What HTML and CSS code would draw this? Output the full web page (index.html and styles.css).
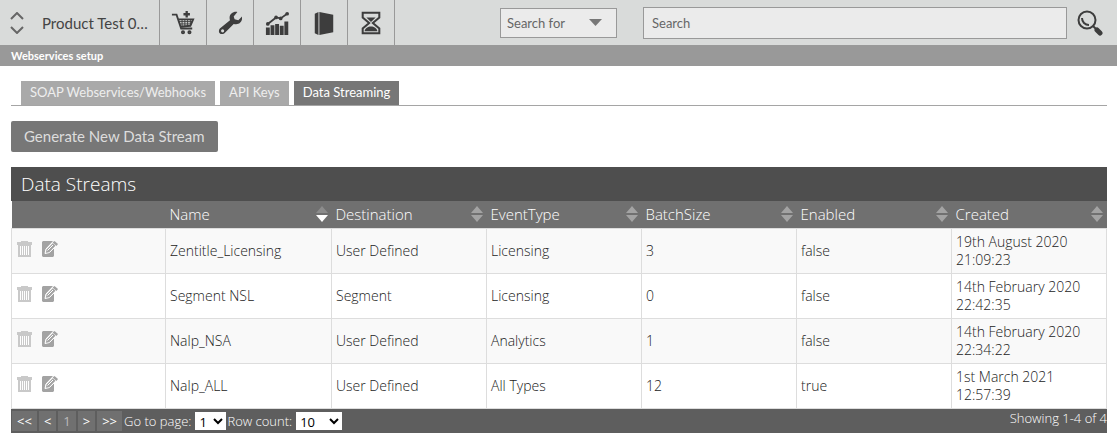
FILE: index.html
```
<!DOCTYPE html>
<html lang="en">
<head>
  <meta charset="UTF-8" />
  <meta name="viewport" content="width=device-width, initial-scale=1.0"/>
  <title>Webservices setup</title>
  <link rel="stylesheet" href="styles.css">
</head>
<body>

  <svg class="sprite" aria-hidden="true">
    <symbol id="trash" viewBox="0 0 16 16">
      <path fill="#c9c9c9" d="M0 1h4V0h7v1h4v3H0z"/>
      <path fill="#c9c9c9" d="M1 4h13v12H1z"/>
      <path stroke="#fff" d="M3.500 5v9M5.500 5v9M7.500 5v9M9.500 5v9M11.500 5v9"/>
    </symbol>
    <symbol id="edit" viewBox="0 0 16 16">
      <path fill="#a3a3a3" d="M1 0h10L4 7.500 3 12l4.500-1L12 6.500V15l-1 1H1l-1-1V1z"/>
      <path fill="#a3a3a3" d="M10.500 1.500 12.500 0 16 3l-1.500 2z"/>
      <path fill="none" stroke="#fff" d="M10.500 1.500 4 8l-1 4.500 4.500-1L14 5"/>
      <path fill="#a3a3a3" d="M10.700 2.200l2.800 2.600L7.300 11l-3.500.7.800-3.300z"/>
      <path stroke="#fff" d="M5.500 9.500 11 4"/>
    </symbol>
    <symbol id="sort" viewBox="0 0 12 16">
      <path d="M6 0l6 7H0z"/>
      <path fill="currentColor" d="M0 9h12l-6 7z"/>
    </symbol>
  </svg>

  <header class="topbar">
    <button class="product">
      <svg width="16" height="22" viewBox="0 0 16 22" fill="none" stroke="#666" stroke-width="2">
        <path d="M2 7l6-6 6 6M2 15l6 6 6-6"/>
      </svg>
      <span>Product Test 0…</span>
    </button>
    <nav class="tools">
      <a href="#" class="tool" aria-label="Orders">
        <svg viewBox="0 0 26 26" fill="none" stroke="#3d3d3d" stroke-width="2">
          <path d="M1 4h5l5 15h12M8 9h16l-3 7-11 1"/>
          <path stroke-width="1" d="M8 11.500h15M9 14h13M12 9v8M15 9v8M18 9v8M21 9v6"/>
          <path stroke-width="2.500" d="M17 0v7M13.500 3.500h7"/>
          <circle cx="13" cy="23" r="1.200"/>
          <circle cx="20" cy="23" r="1.200"/>
        </svg>
      </a>
      <a href="#" class="tool" aria-label="Settings">
        <svg viewBox="0 0 26 26">
          <path fill="#3d3d3d" fill-rule="evenodd" d="M21 1l-4 5 1 3 4 1 4-4c1 5-3 10-9 8L7 24c-4 3-8-1-5-5L13 10c-2-6 3-10 8-9zM5 19.800a1.700 1.700 0 1 0 0 3.400 1.700 1.700 0 0 0 0-3.400z"/>
        </svg>
      </a>
      <a href="#" class="tool" aria-label="Reports">
        <svg viewBox="0 0 26 26" fill="#3d3d3d">
          <path d="M1 18h4.200v8H1zM6 15.500h4.200V26H6zM11 14h4.200v12H11zM16 16h4.200v10H16zM21 11.500h4.200V26H21z"/>
          <path fill="none" stroke="#3d3d3d" stroke-width="2" d="M3 14l9-7 5 1 7-5"/>
          <circle cx="3" cy="14" r="2"/>
          <circle cx="12" cy="7" r="2"/>
          <circle cx="17" cy="8" r="2"/>
          <circle cx="24" cy="3" r="2"/>
        </svg>
      </a>
      <a href="#" class="tool" aria-label="Catalogue">
        <svg viewBox="0 0 26 26" fill="#3d3d3d">
          <path d="M3 3l4-2v25l-4-2zM8 1l15 3v19L8 26z"/>
        </svg>
      </a>
      <a href="#" class="tool" aria-label="History">
        <svg viewBox="0 0 26 26" fill="none" stroke="#3d3d3d" stroke-width="2.200">
          <path d="M4 2h18v5l-7 6 7 6v5H4v-5l7-6-7-6z"/>
          <path fill="#3d3d3d" stroke="none" d="M8 7h10l-5 5zM6 22c1-7 13-7 14 0z"/>
        </svg>
      </a>
    </nav>
    <form class="search">
      <select class="search-for" aria-label="Search for">
        <option>Search for</option>
      </select>
      <input class="search-box" type="text" placeholder="Search" aria-label="Search">
      <button class="search-button" type="button" aria-label="Run search">
        <svg width="26" height="26" viewBox="0 0 26 26" fill="none" stroke="#3d3d3d">
          <circle cx="10" cy="10" r="8.500" stroke-width="2"/>
          <path stroke-width="2" d="M5 8c0 4 3 7 7 7"/>
          <path stroke-width="2" d="M16 16l3 3"/>
          <path stroke-width="5" stroke-linecap="round" d="M20 20l3 3"/>
        </svg>
      </button>
    </form>
  </header>

  <div class="breadcrumb">Webservices setup</div>

  <main>
    <nav class="tabs">
      <a href="#" class="tab">SOAP Webservices/Webhooks</a>
      <a href="#" class="tab">API Keys</a>
      <a href="#" class="tab active">Data Streaming</a>
    </nav>

    <button class="generate">Generate New Data Stream</button>

    <section class="grid">
      <h1>Data Streams</h1>
      <table>
        <colgroup>
          <col class="col-actions">
          <col class="col-name">
          <col><col><col><col><col>
        </colgroup>
        <thead>
          <tr>
            <th></th>
            <th><div class="head sorted">Name <svg><use href="#sort"/></svg></div></th>
            <th><div class="head">Destination <svg><use href="#sort"/></svg></div></th>
            <th><div class="head">EventType <svg><use href="#sort"/></svg></div></th>
            <th><div class="head">BatchSize <svg><use href="#sort"/></svg></div></th>
            <th><div class="head">Enabled <svg><use href="#sort"/></svg></div></th>
            <th><div class="head">Created <svg><use href="#sort"/></svg></div></th>
          </tr>
        </thead>
        <tbody>
          <tr>
            <td><div class="actions"><button aria-label="Delete"><svg><use href="#trash"/></svg></button><button aria-label="Edit"><svg><use href="#edit"/></svg></button></div></td>
            <td>Zentitle_Licensing</td>
            <td>User Defined</td>
            <td>Licensing</td>
            <td>3</td>
            <td>false</td>
            <td>19th August 2020 21:09:23</td>
          </tr>
          <tr>
            <td><div class="actions"><button aria-label="Delete"><svg><use href="#trash"/></svg></button><button aria-label="Edit"><svg><use href="#edit"/></svg></button></div></td>
            <td>Segment NSL</td>
            <td>Segment</td>
            <td>Licensing</td>
            <td>0</td>
            <td>false</td>
            <td>14th February 2020 22:42:35</td>
          </tr>
          <tr>
            <td><div class="actions"><button aria-label="Delete"><svg><use href="#trash"/></svg></button><button aria-label="Edit"><svg><use href="#edit"/></svg></button></div></td>
            <td>Nalp_NSA</td>
            <td>User Defined</td>
            <td>Analytics</td>
            <td>1</td>
            <td>false</td>
            <td>14th February 2020 22:34:22</td>
          </tr>
          <tr>
            <td><div class="actions"><button aria-label="Delete"><svg><use href="#trash"/></svg></button><button aria-label="Edit"><svg><use href="#edit"/></svg></button></div></td>
            <td>Nalp_ALL</td>
            <td>User Defined</td>
            <td>All Types</td>
            <td>12</td>
            <td>true</td>
            <td>1st March 2021 12:57:39</td>
          </tr>
        </tbody>
      </table>
      <div class="pager">
        <div class="pages">
          <button>&lt;&lt;</button>
          <button>&lt;</button>
          <button class="current">1</button>
          <button>&gt;</button>
          <button>&gt;&gt;</button>
        </div>
        <label for="page">Go to page:</label>
        <select id="page" class="page-select"><option>1</option></select>
        <label for="rows">Row count:</label>
        <select id="rows" class="rows-select"><option>10</option><option>20</option><option>50</option></select>
        <span class="showing">Showing 1-4 of 4</span>
      </div>
    </section>
  </main>

</body>
</html>
```
FILE: styles.css
```
* {
  box-sizing: border-box;
}

body {
  margin: 0;
  font-family: 'Open Sans', sans-serif;
  font-size: 13px;
  background: #fff;
  color: #222;
}

button, input, select {
  font-family: inherit;
  margin: 0;
}

button {
  border: none;
  background: none;
  padding: 0;
  cursor: pointer;
}

a {
  text-decoration: none;
}

svg {
  display: block;
  flex: none;
}

.sprite {
  display: none;
}

.topbar,
.breadcrumb,
.tabs,
.generate {
  font-family: Lato, sans-serif;
}

.topbar {
  display: flex;
  height: 45px;
  background: #d9dbda;
}

.product {
  display: flex;
  align-items: center;
  gap: 17px;
  width: 160px;
  padding: 0 0 0 9px;
  border-right: 1px solid #999;
  font-size: 15px;
  color: #444;
  white-space: nowrap;
}

.tools {
  display: flex;
}

.tool {
  display: flex;
  align-items: center;
  justify-content: center;
  width: 47px;
  border-right: 1px solid #999;
}

.tool svg {
  width: 24px;
  height: 24px;
}

.search {
  display: flex;
  flex: 1;
  align-items: center;
  padding: 0 14px 0 105px;
}

.search-for,
.search-box {
  border: 1px solid #999;
  border-radius: 0;
  background: #ebebeb;
  color: #666;
  font-size: 13px;
}

.search-for {
  width: 117px;
  height: 30px;
  padding: 0 6px;
  appearance: none;
  background: #ebebeb url("data:image/svg+xml,%3Csvg xmlns='http://www.w3.org/2000/svg' width='13' height='7'%3E%3Cpath fill='%23777' d='M0 0h13L6.500 7z'/%3E%3C/svg%3E") no-repeat right 14px center;
}

.search-box {
  flex: 1;
  min-width: 0;
  height: 32px;
  margin-left: 26px;
  padding: 0 8px;
}

.search-box::placeholder {
  color: #666;
}

.search-button {
  margin-left: 10px;
}

.breadcrumb {
  padding: 0 11px;
  background: #999;
  color: #fff;
  font-size: 11px;
  font-weight: 700;
  line-height: 21px;
}

main {
  padding: 15px 10px 0 11px;
}

.tabs {
  display: flex;
  gap: 5px;
  padding-left: 10px;
  border-bottom: 1px solid #a5a5a5;
}

.tab {
  padding: 0 9px 2px;
  background: #a9a9a9;
  color: #eee;
  font-size: 13px;
  line-height: 22px;
}

.tab.active {
  background: #777;
  color: #fff;
}

.generate {
  display: block;
  height: 31px;
  margin: 15px 0;
  padding: 0 13px 2px;
  border-radius: 2px;
  background: #777;
  color: #ddd;
  font-size: 15px;
}

.grid h1 {
  margin: 0;
  padding: 0 10px;
  background: #4e4e4e;
  color: #fff;
  font-size: 19px;
  font-weight: 300;
  line-height: 34px;
}

table {
  width: 100%;
  table-layout: fixed;
  border-collapse: collapse;
}

.col-actions {
  width: 154px;
}

.col-name {
  width: 166px;
}

th {
  height: 27px;
  padding: 0 4px;
  background: #707070;
  color: #fff;
  font-size: 15px;
  font-weight: 300;
  line-height: 26px;
  text-align: left;
}

.head {
  display: flex;
  align-items: center;
  justify-content: space-between;
}

.head svg {
  width: 12px;
  height: 16px;
  fill: #a3a3a3;
  color: #a3a3a3;
}

.sorted svg {
  fill: #8c8c8c;
  color: #fff;
}

td {
  height: 45px;
  padding: 0 4px;
  border: 1px solid #ddd;
  font-size: 14px;
  font-weight: 300;
  line-height: 18px;
}

tbody tr:nth-child(odd) {
  background: #f9f9f9;
}

.actions {
  display: flex;
  gap: 9px;
  padding: 0 1px 4px;
}

.actions svg {
  width: 16px;
  height: 16px;
}

.pager {
  display: flex;
  align-items: center;
  height: 25px;
  background: #5e5e5e;
  color: #fff;
  font-size: 13px;
  font-weight: 300;
}

.pages {
  display: flex;
  gap: 2px;
  padding: 0 2px 0 1px;
}

.pages button {
  height: 20px;
  padding: 0 5px;
  background: #707070;
  color: #fff;
  font-size: 13px;
}

.pages .current {
  color: #bbb;
}

.pager select {
  height: 18px;
  padding: 0;
  border: none;
  border-radius: 0;
  background: #fff;
  color: #000;
  font-size: 13px;
}

.page-select {
  width: 31px;
  margin: 0 1px 0 4px;
}

.rows-select {
  width: 46px;
  margin-left: 4px;
}

.showing {
  align-self: flex-start;
  margin-left: auto;
}
```
